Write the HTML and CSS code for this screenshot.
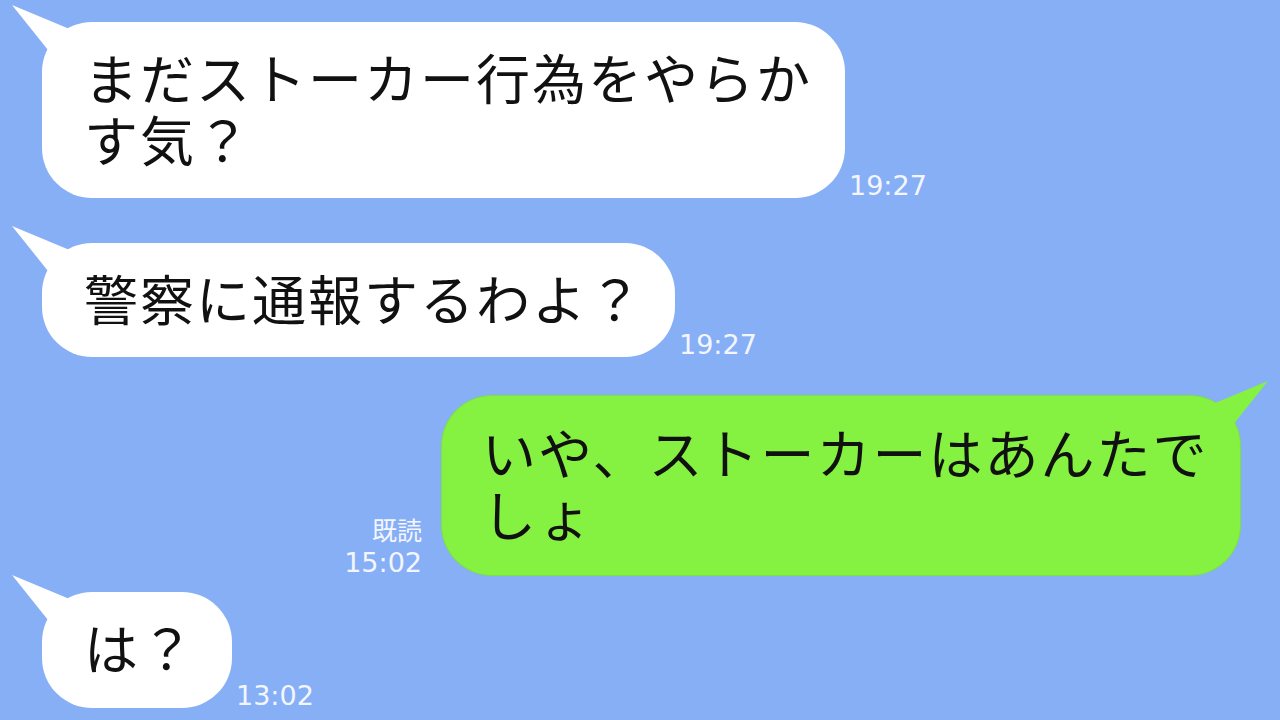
FILE: index.html
```html
<!DOCTYPE html>
<html lang="ja">
<head>
<meta charset="utf-8">
<title>chat</title>
<link rel="stylesheet" href="styles.css">
</head>
<body>
<div class="chat">
  <div class="row left r1">
    <div class="bubble in">
      <svg class="tail tail-in" width="70" height="60" viewBox="0 0 70 60"><polygon points="2,3 62,28 38,48" fill="#ffffff"/></svg>
      <p class="text">まだストーカー行為をやらかす気？</p>
    </div>
    <div class="meta">19:27</div>
  </div>
  <div class="row left r2">
    <div class="bubble in">
      <svg class="tail tail-in" width="70" height="60" viewBox="0 0 70 60"><polygon points="2,3 62,28 38,48" fill="#ffffff"/></svg>
      <p class="text">警察に通報するわよ？</p>
    </div>
    <div class="meta">19:27</div>
  </div>
  <div class="row right r3">
    <div class="meta meta-out"><span>既読</span><span>15:02</span></div>
    <div class="bubble out">
      <svg class="tail tail-out" width="70" height="60" viewBox="0 0 70 60"><polygon points="68,3 8,28 32,48" fill="#85f241"/></svg>
      <p class="text">いや、ストーカーはあんたでしょ</p>
    </div>
  </div>
  <div class="row left r4">
    <div class="bubble in short">
      <svg class="tail tail-in" width="70" height="60" viewBox="0 0 70 60"><polygon points="2,3 62,28 38,48" fill="#ffffff"/></svg>
      <p class="text">は？</p>
    </div>
    <div class="meta">13:02</div>
  </div>
</div>
</body>
</html>
```
FILE: styles.css
```css
html, body {
  margin: 0;
  padding: 0;
}
body {
  width: 1280px;
  height: 720px;
  overflow: hidden;
  background: #87aff6;
  font-family: "Noto Sans CJK JP", "Noto Sans", sans-serif;
}
.chat {
  display: flex;
  flex-direction: column;
  padding-top: 22px;
}
.row {
  display: flex;
  align-items: flex-end;
}
.row.left {
  padding-left: 42px;
}
.row.right {
  justify-content: flex-end;
  padding-right: 40px;
}
.r2 { margin-top: 45px; }
.r3 { margin-top: 39px; }
.r4 { margin-top: 17px; }

.bubble {
  position: relative;
  border-radius: 50px;
  padding: 24px 31px 28px 42px;
}
.bubble.in {
  background: #ffffff;
}
.bubble.short {
  padding-right: 36px;
  padding-bottom: 30px;
}
.bubble.out {
  background: #85f241;
  padding: 25px 28px 30px 40px;
  box-shadow: 0 0 0 1px #7ddf45;
}
.text {
  position: relative;
  margin: 0;
  max-width: 730px;
  font-size: 54px;
  line-height: 62px;
  letter-spacing: 2px;
  color: #111111;
  word-break: break-all;
}
.tail {
  position: absolute;
  display: block;
}
.tail-in {
  left: -32px;
  top: -20px;
}
.tail-out {
  right: -30px;
  top: -18px;
}
.meta {
  font-family: "DejaVu Sans", "Noto Sans CJK JP", sans-serif;
  font-size: 27px;
  line-height: 34px;
  color: #f3f6ff;
  margin-left: 4px;
  margin-bottom: -5px;
}
.meta-out {
  display: flex;
  flex-direction: column;
  align-items: flex-end;
  margin-left: 0;
  margin-right: 20px;
}
.meta-out span:first-child {
  font-family: "Noto Sans CJK JP", sans-serif;
  font-size: 25px;
}
```
